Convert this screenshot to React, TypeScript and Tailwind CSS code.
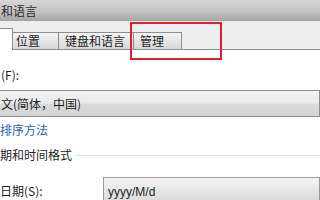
import React from "react";

const cjk = "font-['Microsoft_YaHei','Noto_Sans_CJK_SC',sans-serif]";

export default function App() {
  return (
    <div className={`relative h-[200px] w-[320px] overflow-hidden bg-white text-[12px] leading-none text-[#1e1e1e] ${cjk}`}>
      {/* title bar */}
      <div className="flex h-[22px] items-center border-b border-[#e8e8e8] bg-[linear-gradient(180deg,#d6d6d6,#c4c4c4_55%,#a4a4a4)] pl-px">
        <span className="text-[12px] text-[#2a2a2a]">和语言</span>
      </div>

      {/* tab strip */}
      <div className="flex h-[28px] items-end bg-[#eeeeee]">
        <div className="h-[22px] w-[13px] border-r border-t border-[#8c8f96] bg-white" />
        <div className="flex h-[18px] w-[46px] items-center border-b border-r border-t border-[#8c8f96] bg-[linear-gradient(180deg,#f4f4f4,#e6e6e6_50%,#d8d8d8)] pl-[3px]">
          位置
        </div>
        <div className="flex h-[18px] w-[75px] items-center border-b border-r border-t border-[#8c8f96] bg-[linear-gradient(180deg,#f4f4f4,#e6e6e6_50%,#d8d8d8)] pl-[6px]">
          键盘和语言
        </div>
        <div className="flex h-[18px] w-[48px] items-center border-b border-r border-t border-[#8c8f96] bg-[linear-gradient(180deg,#f4f4f4,#e6e6e6_50%,#d8d8d8)] pl-[6px]">
          管理
        </div>
        <div className="h-[18px] flex-1 border-b border-[#8c8f96]" />
      </div>

      {/* panel */}
      <div className="flex flex-col">
        <div className="ml-px mt-[19px] flex h-[12px] items-center">(F):</div>

        <div className="-ml-[2px] mt-[9px] flex h-[27px] items-center border border-[#8d8d8d] bg-[linear-gradient(180deg,#f3f3f3,#ebebeb_45%,#dadada_55%,#d4d4d4)] pl-[2px]">
          文(简体，中国)
        </div>

        <div className="mt-[7px] flex h-[12px] items-center text-[#1a63b8]">排序方法</div>

        <div className="mt-[13px] flex h-[12px] items-center">
          <span>期和时间格式</span>
          <div className="ml-[4px] h-px flex-1 bg-[#dcdfe3]" />
        </div>

        <div className="mt-[16px] flex items-start">
          <span className="mt-[8px] w-[103px]">日期(S):</span>
          <div className="flex h-[30px] flex-1 items-center border border-[#9a9a9a] bg-[linear-gradient(180deg,#f4f4f4,#e4e4e4_50%,#d6d6d6)] pl-[4px] font-['Liberation_Sans',sans-serif] text-[12px]">
            yyyy/M/d
          </div>
        </div>
      </div>

      {/* annotation */}
      <div className="absolute left-[130px] top-[22px] h-[38px] w-[92px] border-2 border-[#e0202a]" />
    </div>
  );
}
